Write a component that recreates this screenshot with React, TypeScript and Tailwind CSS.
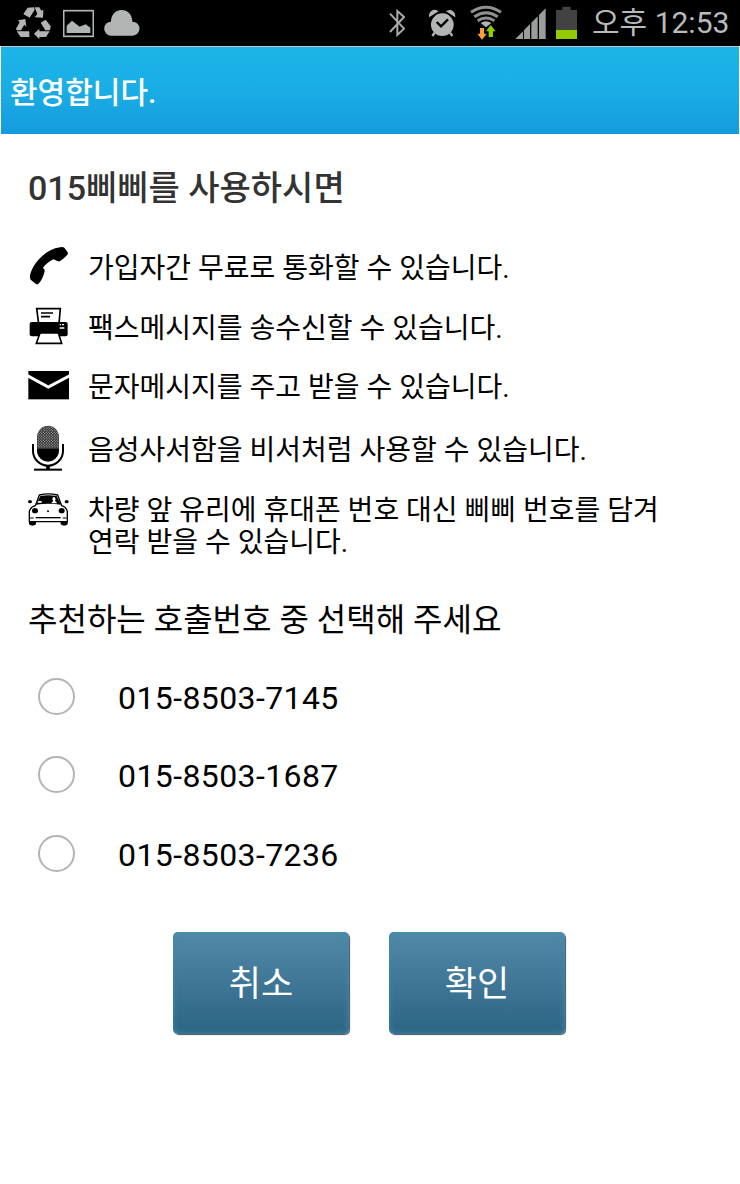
import React, { useState } from 'react';

const RecycleIcon: React.FC = () => (
  <svg className="w-10 h-[46px] shrink-0" viewBox="42 0 120 138" fill="#b3b5b4">
    <path d="M70 42L83 23L102 22L104 29L89 53Z" />
    <path d="M104 22H118L124 32L130 29L129 53L104 52L112 42Z" />
    <path d="M54 61L76 57L79 80L73 74L63 91H50L48 86L59 67Z" />
    <path d="M50 94H88V111H62Z" />
    <path d="M122 68L137 59L152 79L150 91H136Z" />
    <path d="M102 101L118 86V94H149L138 111H118V118Z" />
  </svg>
);

const PictureIcon: React.FC = () => (
  <svg className="w-[31px] h-[46px] shrink-0" viewBox="188 0 93 138">
    <rect x="190" y="32" width="89" height="77" fill="none" stroke="#b3b5b4" strokeWidth="5" />
    <path d="M199 99V77L215 62L238 80L256 73L270 83V99Z" fill="#b3b5b4" />
  </svg>
);

const CloudIcon: React.FC = () => (
  <svg className="w-[36px] h-[46px] shrink-0" viewBox="313 0 108 138" fill="#b3b5b4">
    <path d="M335 107A21 21 0 0 1 334 65C334 43 349 30 366 30C383 30 398 43 398 65A21 21 0 0 1 399 107Z" />
  </svg>
);

const BluetoothIcon: React.FC = () => (
  <svg className="w-4 h-[46px] shrink-0" viewBox="56 0 48 138" fill="none" stroke="#a8aaa9" strokeWidth="6">
    <path d="M59 41L101 86L81 105V33L101 51L59 96" />
  </svg>
);

const AlarmIcon: React.FC = () => (
  <svg className="w-[27px] h-[46px] shrink-0" viewBox="177 0 81 138">
    <g fill="#b3b5b4">
      <circle cx="217" cy="74" r="34" />
      <path d="M179 48A15 15 0 0 1 202 34Z" stroke="#b3b5b4" strokeWidth="4" />
      <path d="M254 48A15 15 0 0 0 232 34Z" stroke="#b3b5b4" strokeWidth="4" />
      <path d="M194 98L187 108M240 98L247 108" stroke="#b3b5b4" strokeWidth="7" />
    </g>
    <path d="M200 66L213 79L234 58" fill="none" stroke="#000" strokeWidth="7" />
  </svg>
);

const WifiIcon: React.FC = () => (
  <svg className="w-[33px] h-[46px] shrink-0" viewBox="300 0 99 138">
    <g fill="none" stroke="#8f9190" strokeWidth="9">
      <path d="M303 37Q348 7 393 37" />
      <path d="M313 50Q348 26 383 50" />
      <path d="M323 62Q348 46 373 62" />
    </g>
    <path d="M332 69Q348 58 364 69L348 82Z" fill="#b3b5b4" />
    <path d="M330 84H342V101H350L336 119L322 101H330Z" fill="#ff9c38" />
    <path d="M356 111H369V94H377L362 75L348 94H356Z" fill="#92cc00" />
  </svg>
);

const SignalIcon: React.FC = () => (
  <svg className="w-[31px] h-[46px] shrink-0" viewBox="435 0 93 138" fill="#9b9d9c">
    <path d="M436 117L459 94V117ZM462 90L480 72V117H462ZM484 68L503 49V117H484ZM507 45L527 25V117H507Z" />
  </svg>
);

const BatteryIcon: React.FC = () => (
  <svg className="w-[21px] h-[46px] shrink-0" viewBox="558 0 63 138">
    <path d="M558 30H577V20H602V30H621V90H558Z" fill="#424242" />
    <rect x="558" y="90" width="63" height="27" fill="#92cc00" />
  </svg>
);

const PhoneIcon: React.FC = () => (
  <svg className="w-[42px] h-10" viewBox="0 0 126 120">
    <path d="M96 4Q104 2 109 5L119 19Q121 24 117 28Q106 39 95 46Q88 47 77 40Q58 48 45 65Q51 70 50 76Q45 98 33 112Q29 117 24 114L8 101Q5 97 6 88C14 52 52 10 96 4Z" />
  </svg>
);

const PrinterIcon: React.FC = () => (
  <svg className="w-[42px] h-[39px]" viewBox="0 0 126 117">
    <path d="M26 5H97L93 50H32Z" fill="#fff" stroke="#000" strokeWidth="5" />
    <path d="M39 18H75M39 29H66" stroke="#000" strokeWidth="5" />
    <rect x="5" y="45" width="114" height="43" rx="6" />
    <path d="M95 53H99M102 53H108M95 63H109" stroke="#fff" strokeWidth="4" />
    <path d="M36 78H91L101 109H25Z" fill="#fff" stroke="#000" strokeWidth="5" />
  </svg>
);

const EnvelopeIcon: React.FC = () => (
  <svg className="w-[42px] h-[30px]" viewBox="0 0 126 90">
    <rect x="1" y="3" width="122" height="85" />
    <path d="M-2 17L61 51L126 17" fill="none" stroke="#fff" strokeWidth="9" />
  </svg>
);

const MicIcon: React.FC = () => (
  <svg className="w-[42px] h-[46px]" viewBox="0 0 126 138">
    <defs>
      <pattern id="mesh" width="8" height="8" patternUnits="userSpaceOnUse">
        <rect width="8" height="8" />
        <circle cx="2" cy="2" r="1.9" fill="#fff" />
        <circle cx="6" cy="6" r="1.9" fill="#fff" />
      </pattern>
    </defs>
    <path d="M27 70V36A33 34 0 0 1 93 36V70Z" fill="url(#mesh)" />
    <path d="M27 70H93V76A33 34 0 0 1 27 76Z" />
    <path d="M15 57V77A45 45 0 0 0 105 77V57" fill="none" stroke="#000" strokeWidth="6" />
    <path d="M60 122V134" stroke="#000" strokeWidth="11" />
    <path d="M18 134H102" stroke="#000" strokeWidth="6" />
  </svg>
);

const CarIcon: React.FC = () => (
  <svg className="w-[42px] h-[35px]" viewBox="0 0 126 105">
    <path d="M3 82H24V97Q13 105 3 97ZM98 82H119V97Q109 105 98 97Z" />
    <path d="M22 41L34 9Q61 2 89 9L101 41Q114 44 118 58V89H4V58Q8 44 22 41Z" fill="#fff" stroke="#000" strokeWidth="4" />
    <path d="M24 38L37 12Q61 8 86 12L99 38Q61 33 24 38Z" />
    <path d="M31 27H41V32H29ZM70 34Q72 29 76 27Q71 22 74 17Q78 13 82 18Q84 23 81 27Q86 29 87 34Z" fill="#fff" />
    <ellipse cx="6" cy="29" rx="6" ry="5" />
    <ellipse cx="116" cy="29" rx="6" ry="5" />
    <ellipse cx="21" cy="56" rx="9" ry="8" />
    <ellipse cx="101" cy="56" rx="9" ry="8" />
    <circle cx="60" cy="58" r="3" />
    <path d="M23 77H98" stroke="#000" strokeWidth="4" />
    <path d="M6 78H17M104 78H116" stroke="#000" strokeWidth="3" />
  </svg>
);

const features = [
  { icon: <PhoneIcon />, text: '가입자간 무료로 통화할 수 있습니다.', row: 'h-[60px] -mt-px' },
  { icon: <PrinterIcon />, text: '팩스메시지를 송수신할 수 있습니다.', row: 'h-[60px]' },
  { icon: <EnvelopeIcon />, text: '문자메시지를 주고 받을 수 있습니다.', row: 'h-[58px]' },
  { icon: <MicIcon />, text: '음성사서함을 비서처럼 사용할 수 있습니다.', row: 'h-[65px] pt-[3px]' },
];

const numbers = ['015-8503-7145', '015-8503-1687', '015-8503-7236'];

const buttonClass =
  "w-[176px] h-[102px] rounded-[5px] bg-linear-to-b from-[#5289a8] to-[#2c6483] text-white text-[35px] pt-1.5 shadow-[inset_0_0_6px_#3d8dae,1px_1px_1px_#49565d]";

const App: React.FC = () => {
  const [selected, setSelected] = useState<string | null>(null);

  return (
    <div className="w-[740px] h-[1184px] bg-white text-black overflow-hidden font-[Roboto,'Noto_Sans_CJK_KR',sans-serif]">
      {/* Status bar */}
      <div className="h-[46px] bg-black flex items-center pl-[14px]">
        <RecycleIcon />
        <div className="ml-[9px] flex"><PictureIcon /></div>
        <div className="ml-[10px] flex"><CloudIcon /></div>
        <div className="ml-auto flex items-center pr-[10px]">
          <BluetoothIcon />
          <div className="ml-6 flex"><AlarmIcon /></div>
          <div className="ml-[14px] flex"><WifiIcon /></div>
          <div className="ml-3 flex"><SignalIcon /></div>
          <div className="ml-[10px] flex"><BatteryIcon /></div>
          <span className="ml-[15px] w-[138px] text-[30px] leading-[46px] text-[#b9bbba] whitespace-nowrap">오후 12:53</span>
        </div>
      </div>

      {/* Title bar */}
      <header className="h-[88px] mx-px border-t border-[#b9c9ce] bg-linear-to-b from-[#1cb5e8] via-[#1aade5] to-[#159bdc] flex items-center pl-[9px]">
        <h1 className="pt-1 text-[30px] font-medium text-white">환영합니다.</h1>
      </header>

      <main className="px-7">
        <h2 className="h-[103px] pt-[30px] text-[34px] leading-[48px] font-medium text-[#333]">015삐삐를 사용하시면</h2>

        <ul>
          {features.map((f) => (
            <li key={f.text} className={`flex items-center gap-[18px] ${f.row}`}>
              {f.icon}
              <span className="pt-[5px] text-[28px] leading-8 whitespace-nowrap">{f.text}</span>
            </li>
          ))}
          <li className="flex items-start gap-[18px] pt-[13px] h-[98px]">
            <CarIcon />
            <span className="pt-[3px] text-[28px] leading-8 whitespace-nowrap">
              차량 앞 유리에 휴대폰 번호 대신 삐삐 번호를 담겨
              <br />
              연락 받을 수 있습니다.
            </span>
          </li>
        </ul>

        <p className="h-[80px] pt-[19px] text-[32px] leading-[48px] whitespace-nowrap">추천하는 호출번호 중 선택해 주세요</p>

        <div className="pl-[10px]">
          {numbers.map((n) => (
            <label key={n} className="h-[78.5px] flex items-center gap-[43px]">
              <input
                type="radio"
                name="number"
                checked={selected === n}
                onChange={() => setSelected(n)}
                className="appearance-none size-[37px] rounded-full border-2 border-[#b5b5b5] bg-white checked:border-[#1aade5]"
              />
              <span className="pt-[3px] text-[32px] leading-10 tracking-[0.4px]">{n}</span>
            </label>
          ))}
        </div>

        <div className="mt-[39px] mr-0.5 flex justify-center gap-[40px]">
          <button className={buttonClass}>취소</button>
          <button className={buttonClass}>확인</button>
        </div>
      </main>
    </div>
  );
};

export default App;
